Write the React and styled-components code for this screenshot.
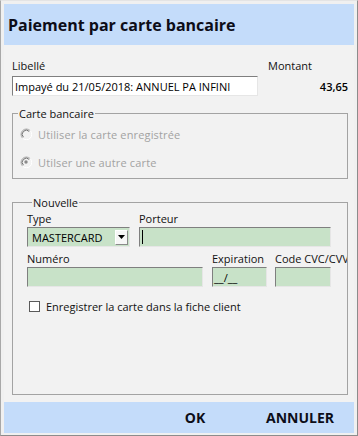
import React from 'react';
import styled, { createGlobalStyle } from 'styled-components';

const GlobalStyle = createGlobalStyle`
  html, body {
    margin: 0;
    padding: 0;
    background: #ffffff;
  }

  body {
    font-family: "Open Sans", "Liberation Sans", sans-serif;
    font-size: 11px;
    color: #000;
  }

  * {
    box-sizing: border-box;
  }
`;

const blue = '#c4dcfa';
const green = '#c8e2c8';

const Window = styled.div`
  width: 358px;
  height: 436px;
  display: flex;
  flex-direction: column;
  background: #f0f0f0;
  border: 1px solid;
  border-color: #e4e4e4 #8c8c8c #8c8c8c #a8a8a8;
  padding: 3px 3px 2px 3px;
`;

const TitleBar = styled.div`
  height: 41px;
  flex: none;
  display: flex;
  align-items: center;
  padding-left: 4px;
  background: ${blue};
  font-size: 16px;
  font-weight: 700;
  color: #0d0d18;
`;

const Content = styled.div`
  flex: 1;
  display: flex;
  flex-direction: column;
  padding: 13px 6px 7px 8px;
  background: #f2f2f2;
`;

const TopRow = styled.div`
  display: grid;
  grid-template-columns: 246px 1fr;
  column-gap: 10px;
`;

const Field = styled.div`
  display: flex;
  flex-direction: column;
  width: ${(p) => (p.$width ? `${p.$width}px` : 'auto')};
  flex: none;
`;

const Label = styled.div`
  height: 15px;
  line-height: 15px;
  margin-bottom: ${(p) => (p.$gap != null ? p.$gap : 1)}px;
  white-space: nowrap;
  color: #111;
`;

const Sunken = styled.div`
  height: 20px;
  display: flex;
  align-items: center;
  padding-left: ${(p) => (p.$pad != null ? p.$pad : 2)}px;
  background: ${(p) => p.$bg || '#ffffff'};
  border: 1px solid;
  border-color: #7f7f7f #e6e6e6 #e6e6e6 #7f7f7f;
  white-space: nowrap;
  overflow: hidden;
`;

const Amount = styled.div`
  height: 20px;
  display: flex;
  align-items: center;
  justify-content: flex-end;
  font-weight: 600;
`;

const Group = styled.fieldset`
  margin: ${(p) => p.$top}px 0 0 0;
  padding: ${(p) => p.$pad};
  border: 1px solid #a3a3a3;
  min-width: 0;
  flex: ${(p) => (p.$grow ? 1 : 'none')};
  overflow: hidden;
  display: flex;
  flex-direction: column;
  gap: ${(p) => p.$gap || 0}px;

  & > legend {
    padding: 0 1px;
    margin-left: 5px;
    height: 15px;
    line-height: 15px;
    color: #111;
  }
`;

const OptionRow = styled.div`
  height: 20px;
  display: flex;
  align-items: center;
  gap: 6px;
  padding-left: 7px;
  color: #a2a2a2;
  letter-spacing: 0.15px;
`;

const FieldRow = styled.div`
  display: flex;
  gap: ${(p) => p.$gap}px;
  margin-top: ${(p) => p.$top || 0}px;
`;

const Combo = styled(Sunken)`
  justify-content: space-between;
  padding-left: 4px;
  padding-right: 1px;
`;

const DropButton = styled.div`
  width: 13px;
  height: 15px;
  display: flex;
  align-items: center;
  justify-content: center;
  background: #f6f6f6;
  border: 1px solid;
  border-color: #ffffff #8a8a8a #8a8a8a #ffffff;
`;

const Caret = styled.span`
  width: 1px;
  height: 14px;
  background: #000;
`;

const CheckRow = styled.label`
  display: flex;
  align-items: center;
  gap: 6px;
  height: 15px;
  margin-top: 12px;
  padding-left: 2px;
  color: #111;
`;

const CheckBox = styled.span`
  width: 11px;
  height: 11px;
  background: #ffffff;
  border: 1px solid #5a5a5a;
`;

const Footer = styled.div`
  height: 31px;
  flex: none;
  display: flex;
  align-items: center;
  justify-content: flex-end;
  gap: 35px;
  padding-right: 19px;
  background: ${blue};
`;

const FooterButton = styled.button`
  width: 70px;
  height: 24px;
  padding: 0;
  border: none;
  background: transparent;
  font-family: inherit;
  font-size: 14px;
  font-weight: 700;
  color: #0d0d18;
  cursor: pointer;
`;

const Radio = ({ checked }) => (
  <svg width="12" height="12" viewBox="0 0 12 12">
    <path d="M10.2 2.6 A5 5 0 1 0 2.6 10.2" fill="none" stroke="#a8a8a8" strokeWidth="1" />
    <path d="M9.2 3.4 A3.8 3.8 0 1 0 3.4 9.2" fill="none" stroke="#6e6e6e" strokeWidth="1" />
    <path d="M2.6 10.2 A5 5 0 0 0 10.2 2.6" fill="none" stroke="#ffffff" strokeWidth="1" />
    {checked && <circle cx="6" cy="6" r="1.7" fill="#8a8a8a" />}
  </svg>
);

const DownArrow = () => (
  <svg width="7" height="4" viewBox="0 0 7 4">
    <path d="M0 0 H7 L3.5 4 Z" fill="#000" />
  </svg>
);

const App = () => (
  <>
    <GlobalStyle />
    <Window>
      <TitleBar>Paiement par carte bancaire</TitleBar>
      <Content>
        <TopRow>
          <Field>
            <Label $gap={3}>Libellé</Label>
            <Sunken>Impayé du 21/05/2018: ANNUEL PA INFINI</Sunken>
          </Field>
          <Field>
            <Label $gap={3}>Montant</Label>
            <Amount>43,65</Amount>
          </Field>
        </TopRow>

        <Group $top={10} $pad="3px 0 6px 0" $gap={8}>
          <legend>Carte bancaire</legend>
          <OptionRow>
            <Radio />
            Utiliser la carte enregistrée
          </OptionRow>
          <OptionRow>
            <Radio checked />
            Utilser une autre carte
          </OptionRow>
        </Group>

        <Group $top={16} $pad="1px 0 0 14px" $grow>
          <legend>Nouvelle</legend>
          <FieldRow $gap={9}>
            <Field $width={103}>
              <Label>Type</Label>
              <Combo $bg={green}>
                MASTERCARD
                <DropButton>
                  <DownArrow />
                </DropButton>
              </Combo>
            </Field>
            <Field $width={192}>
              <Label>Porteur</Label>
              <Sunken $bg={green} $pad={2}>
                <Caret />
              </Sunken>
            </Field>
          </FieldRow>
          <FieldRow $gap={9} $top={4}>
            <Field $width={176}>
              <Label>Numéro</Label>
              <Sunken $bg={green} />
            </Field>
            <FieldRow $gap={8}>
              <Field $width={55}>
                <Label>Expiration</Label>
                <Sunken $bg={green} $pad={1}>__/__</Sunken>
              </Field>
              <Field $width={56}>
                <Label>Code CVC/CVV</Label>
                <Sunken $bg={green} />
              </Field>
            </FieldRow>
          </FieldRow>
          <CheckRow>
            <CheckBox />
            Enregistrer la carte dans la fiche client
          </CheckRow>
        </Group>
      </Content>
      <Footer>
        <FooterButton type="button">OK</FooterButton>
        <FooterButton type="button">ANNULER</FooterButton>
      </Footer>
    </Window>
  </>
);

export default App;
